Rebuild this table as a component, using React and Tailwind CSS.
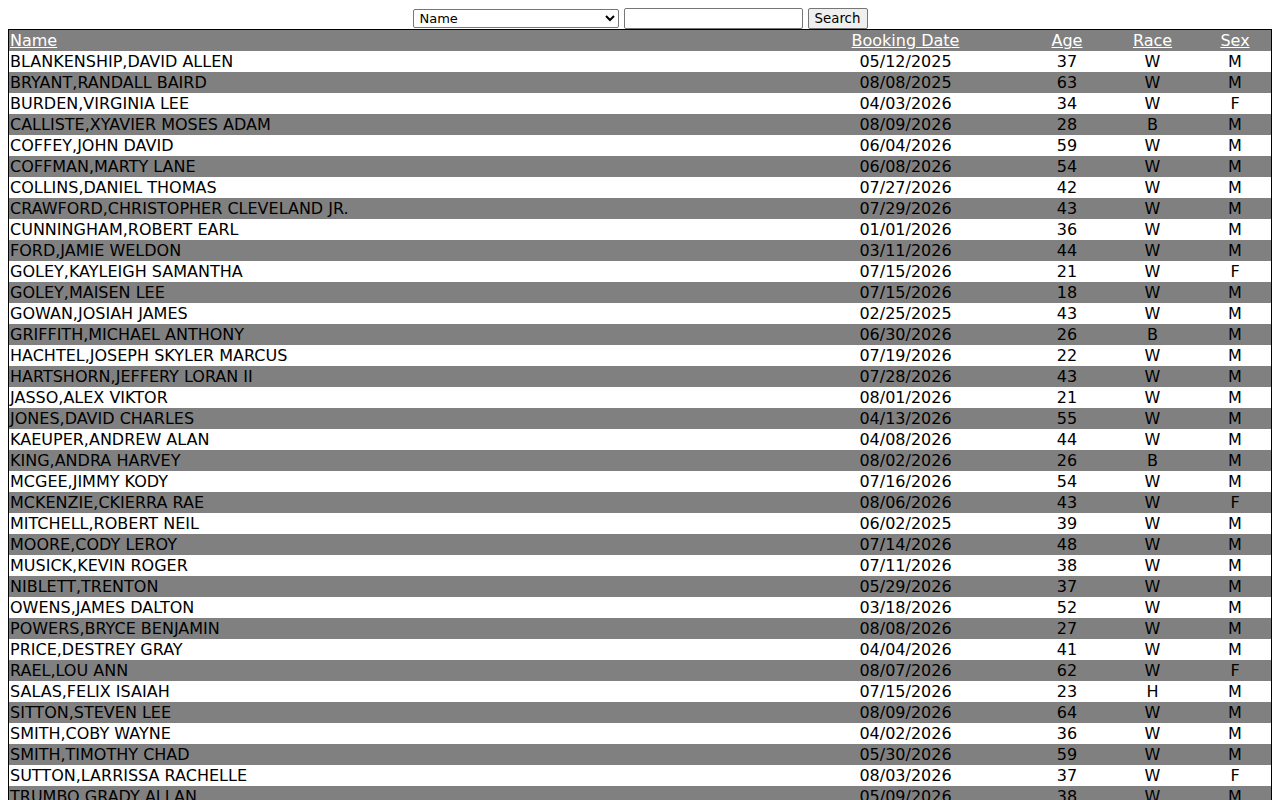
import React from "react";

const rows = [
  ["BLANKENSHIP,DAVID ALLEN", "05/12/2025", "37", "W", "M"],
  ["BRYANT,RANDALL BAIRD", "08/08/2025", "63", "W", "M"],
  ["BURDEN,VIRGINIA LEE", "04/03/2026", "34", "W", "F"],
  ["CALLISTE,XYAVIER MOSES ADAM", "08/09/2026", "28", "B", "M"],
  ["COFFEY,JOHN DAVID", "06/04/2026", "59", "W", "M"],
  ["COFFMAN,MARTY LANE", "06/08/2026", "54", "W", "M"],
  ["COLLINS,DANIEL THOMAS", "07/27/2026", "42", "W", "M"],
  ["CRAWFORD,CHRISTOPHER CLEVELAND JR.", "07/29/2026", "43", "W", "M"],
  ["CUNNINGHAM,ROBERT EARL", "01/01/2026", "36", "W", "M"],
  ["FORD,JAMIE WELDON", "03/11/2026", "44", "W", "M"],
  ["GOLEY,KAYLEIGH SAMANTHA", "07/15/2026", "21", "W", "F"],
  ["GOLEY,MAISEN LEE", "07/15/2026", "18", "W", "M"],
  ["GOWAN,JOSIAH JAMES", "02/25/2025", "43", "W", "M"],
  ["GRIFFITH,MICHAEL ANTHONY", "06/30/2026", "26", "B", "M"],
  ["HACHTEL,JOSEPH SKYLER MARCUS", "07/19/2026", "22", "W", "M"],
  ["HARTSHORN,JEFFERY LORAN II", "07/28/2026", "43", "W", "M"],
  ["JASSO,ALEX VIKTOR", "08/01/2026", "21", "W", "M"],
  ["JONES,DAVID CHARLES", "04/13/2026", "55", "W", "M"],
  ["KAEUPER,ANDREW ALAN", "04/08/2026", "44", "W", "M"],
  ["KING,ANDRA HARVEY", "08/02/2026", "26", "B", "M"],
  ["MCGEE,JIMMY KODY", "07/16/2026", "54", "W", "M"],
  ["MCKENZIE,CKIERRA RAE", "08/06/2026", "43", "W", "F"],
  ["MITCHELL,ROBERT NEIL", "06/02/2025", "39", "W", "M"],
  ["MOORE,CODY LEROY", "07/14/2026", "48", "W", "M"],
  ["MUSICK,KEVIN ROGER", "07/11/2026", "38", "W", "M"],
  ["NIBLETT,TRENTON", "05/29/2026", "37", "W", "M"],
  ["OWENS,JAMES DALTON", "03/18/2026", "52", "W", "M"],
  ["POWERS,BRYCE BENJAMIN", "08/08/2026", "27", "W", "M"],
  ["PRICE,DESTREY GRAY", "04/04/2026", "41", "W", "M"],
  ["RAEL,LOU ANN", "08/07/2026", "62", "W", "F"],
  ["SALAS,FELIX ISAIAH", "07/15/2026", "23", "H", "M"],
  ["SITTON,STEVEN LEE", "08/09/2026", "64", "W", "M"],
  ["SMITH,COBY WAYNE", "04/02/2026", "36", "W", "M"],
  ["SMITH,TIMOTHY CHAD", "05/30/2026", "59", "W", "M"],
  ["SUTTON,LARRISSA RACHELLE", "08/03/2026", "37", "W", "F"],
  ["TRUMBO,GRADY ALLAN", "05/09/2026", "38", "W", "M"],
  ["TURNER,JOSHUA LEE", "07/21/2026", "31", "W", "M"],
  ["WALKER,BRANDON SCOTT", "06/17/2026", "29", "W", "M"],
];

export default function App() {
  return (
    <div
      className="m-2 text-[16px] leading-[19px] text-black bg-white"
      style={{ fontFamily: '"DejaVu Sans", sans-serif' }}
    >
      <div className="flex justify-center items-center h-[21px] gap-[5px]">
        <select
          defaultValue="Name"
          className="w-[206px] h-[19px] text-[13px] leading-[15px] border border-[#767676] rounded-[2px] bg-white px-[2px] text-black"
          style={{ fontFamily: '"DejaVu Sans", sans-serif' }}
        >
          <option>Name</option>
          <option>Booking Date</option>
          <option>Age</option>
          <option>Race</option>
          <option>Sex</option>
        </select>
        <input
          type="text"
          className="w-[179px] h-[21px] border border-[#767676] rounded-[2px] bg-white px-[2px] text-[13px]"
        />
        <button
          className="w-[60px] h-[21px] text-[13.33px] leading-[15px] border border-[#767676] rounded-[2px] bg-[#efefef] text-black text-center"
          style={{ fontFamily: '"DejaVu Sans", sans-serif' }}
        >
          Search
        </button>
      </div>
      <table className="w-[1264px] table-fixed border-separate border-spacing-0 border border-black">
        <colgroup>
          <col className="w-[774px]" />
          <col className="w-[245px]" />
          <col className="w-[78px]" />
          <col className="w-[93px]" />
          <col className="w-[72px]" />
        </colgroup>
        <thead>
          <tr className="bg-[#808080] text-white">
            <th className="p-[1px] text-left font-normal underline">Name</th>
            <th className="p-[1px] text-center font-normal underline">Booking Date</th>
            <th className="p-[1px] text-center font-normal underline">Age</th>
            <th className="p-[1px] text-center font-normal underline">Race</th>
            <th className="p-[1px] text-center font-normal underline">Sex</th>
          </tr>
        </thead>
        <tbody>
          {rows.map((r, i) => (
            <tr key={i} className={i % 2 === 0 ? "bg-white" : "bg-[#808080]"}>
              <td className="p-[1px] text-left whitespace-nowrap">{r[0]}</td>
              <td className="p-[1px] text-center">{r[1]}</td>
              <td className="p-[1px] text-center">{r[2]}</td>
              <td className="p-[1px] text-center">{r[3]}</td>
              <td className="p-[1px] text-center">{r[4]}</td>
            </tr>
          ))}
        </tbody>
      </table>
    </div>
  );
}
